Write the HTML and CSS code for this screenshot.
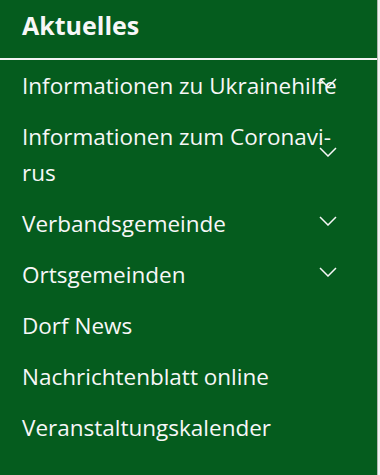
FILE: index.html
```html
<!DOCTYPE html>
<html lang="de">
  <head>
    <meta charset="UTF-8" />
    <title>Aktuelles</title>
    <link rel="stylesheet" href="styles.css">
  </head>
  <body>
    <nav class="side-menu">
      <h2 class="menu-title">Aktuelles</h2>
      <ul class="menu-list">
        <li class="menu-item has-sub">
          <a href="#">Informationen zu Ukrainehilfe</a>
          <svg class="chevron" viewBox="0 0 18 10" width="18" height="10"><polyline points="1,1 9,9 17,1" /></svg>
        </li>
        <li class="menu-item has-sub">
          <a href="#">Informationen zum Coronavi&shy;rus</a>
          <svg class="chevron" viewBox="0 0 18 10" width="18" height="10"><polyline points="1,1 9,9 17,1" /></svg>
        </li>
        <li class="menu-item has-sub">
          <a href="#">Verbandsgemeinde</a>
          <svg class="chevron" viewBox="0 0 18 10" width="18" height="10"><polyline points="1,1 9,9 17,1" /></svg>
        </li>
        <li class="menu-item has-sub">
          <a href="#">Ortsgemeinden</a>
          <svg class="chevron" viewBox="0 0 18 10" width="18" height="10"><polyline points="1,1 9,9 17,1" /></svg>
        </li>
        <li class="menu-item"><a href="#">Dorf News</a></li>
        <li class="menu-item"><a href="#">Nachrichtenblatt online</a></li>
        <li class="menu-item"><a href="#">Veranstaltungskalender</a></li>
      </ul>
    </nav>
  </body>
</html>
```

FILE: styles.css
```css
body {
  margin: 0;
  padding: 0;
  background-color: #f1f1f1;
  font-family: "Open Sans", Arial, sans-serif;
}

.side-menu {
  width: 377px;
  height: 475px;
  background-color: #055c1e;
  border-right: 1px solid #b5b5b5;
  color: #f7f7f7;
  overflow: hidden;
}

.menu-title {
  margin: 0;
  padding: 10px 22px 18px;
  font-size: 25px;
  font-weight: bold;
  line-height: 30px;
  border-bottom: 2px solid #f4f4f4;
}

.menu-list {
  list-style: none;
  margin: 0;
  padding: 0;
}

.menu-item {
  position: relative;
}

.menu-item a {
  display: block;
  padding: 7.5px 37px 7.5px 22px;
  font-size: 22.5px;
  line-height: 36px;
  color: #f7f7f7;
  text-decoration: none;
  hyphens: manual;
}

.chevron {
  position: absolute;
  right: 40px;
  top: 50%;
  margin-top: -8px;
  fill: none;
  stroke: #f7f7f7;
  stroke-width: 1.5;
}
```
